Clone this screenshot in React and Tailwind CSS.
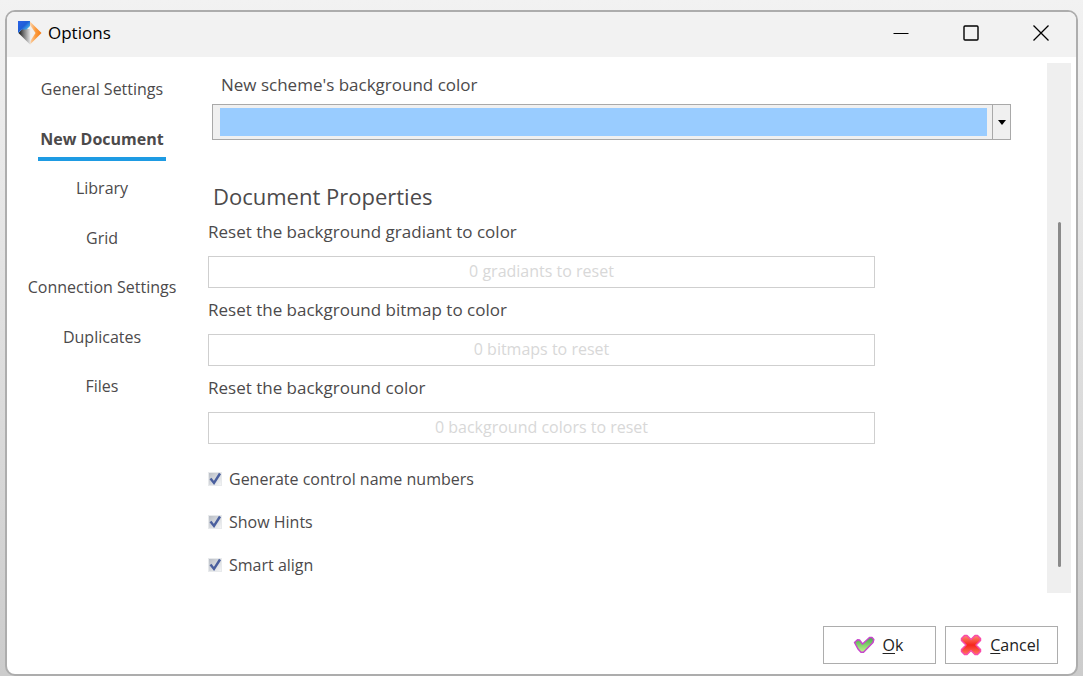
import React, { useState } from 'react';

const tabs = [
  'General Settings',
  'New Document',
  'Library',
  'Grid',
  'Connection Settings',
  'Duplicates',
  'Files',
];

const resets = [
  { id: 'gradiant', label: 'Reset the background gradiant to color', action: '0 gradiants to reset' },
  { id: 'bitmap', label: 'Reset the background bitmap to color', action: '0 bitmaps to reset' },
  { id: 'color', label: 'Reset the background color', action: '0 background colors to reset' },
];

const toggles = ['Generate control name numbers', 'Show Hints', 'Smart align'];

const Logo = () => (
  <svg width="24" height="24" viewBox="0 0 24 24" aria-hidden="true">
    <defs>
      <linearGradient id="blue" x1="0" y1="0" x2="1" y2="1">
        <stop offset="0" stopColor="#2a62e8" />
        <stop offset="0.45" stopColor="#1f5fd6" />
        <stop offset="0.8" stopColor="#4fc6ee" />
        <stop offset="1" stopColor="#1b86c8" />
      </linearGradient>
      <linearGradient id="dark" x1="0" y1="0" x2="1" y2="0">
        <stop offset="0" stopColor="#111111" />
        <stop offset="0.4" stopColor="#6d6d6d" />
        <stop offset="1" stopColor="#e8e8e8" />
      </linearGradient>
      <linearGradient id="orange" x1="0" y1="0" x2="1" y2="0">
        <stop offset="0" stopColor="#fbd3ab" />
        <stop offset="0.5" stopColor="#fb9a3c" />
        <stop offset="1" stopColor="#f57a12" />
      </linearGradient>
    </defs>
    <path d="M12 0.5 L23.5 12 L12 23.5 Z" fill="url(#orange)" />
    <path d="M8 8 L12 4 L17.5 12 L12 20.5 Z" fill="#f1efed" />
    <path d="M0.5 12 L4 8 H12.5 V23.5 H12 Z" fill="url(#dark)" />
    <path d="M0 0 H12 V5 L8.5 8.5 H4 L0 12 Z" fill="url(#blue)" />
  </svg>
);

const CheckIcon = () => (
  <svg width="22" height="18" viewBox="0 0 22 18" aria-hidden="true">
    <defs>
      <linearGradient id="green" x1="0" y1="0" x2="0" y2="1">
        <stop offset="0" stopColor="#46a84a" />
        <stop offset="1" stopColor="#c0f890" />
      </linearGradient>
    </defs>
    <path
      d="M1.5 6.5 L4.5 3.8 L6.5 4 L9.5 8 L16.5 1.5 L19 1.5 L20.8 3.5 L20 6.5 L10.5 16.2 L8 16.2 L5 13 Z"
      fill="url(#green)"
      stroke="#c845cc"
      strokeWidth="1.5"
      strokeLinejoin="round"
    />
  </svg>
);

const CrossIcon = () => (
  <svg width="22" height="22" viewBox="0 0 22 22" aria-hidden="true">
    <defs>
      <linearGradient id="red" x1="0" y1="0" x2="0" y2="1">
        <stop offset="0" stopColor="#ff8a72" />
        <stop offset="0.5" stopColor="#f5261c" />
        <stop offset="1" stopColor="#ff7560" />
      </linearGradient>
    </defs>
    <path
      d="M1.5 4.5 L4.5 1.5 L7 1.5 L11 5.5 L15 1.5 L17.5 1.5 L20.5 4.5 L20.5 6.5 L16 11 L20.5 15.5 L20.5 17.5 L17.5 20.5 L15 20.5 L11 16.5 L7 20.5 L4.5 20.5 L1.5 17.5 L1.5 15.5 L6 11 L1.5 6.5 Z"
      fill="url(#red)"
      stroke="#f94bab"
      strokeWidth="1.5"
      strokeLinejoin="round"
    />
  </svg>
);

const TitleBar = () => (
  <header className="flex h-[45px] shrink-0 items-center bg-[#f2f2f2] pb-[3px] pl-[11px]">
    <Logo />
    <h1 className="ml-[6px] flex-1 text-[17px] text-black">Options</h1>
    <button type="button" aria-label="Minimize" className="flex h-full w-[70px] items-center justify-center">
      <svg width="16" height="16" viewBox="0 0 16 16" stroke="#000">
        <path d="M0.5 8.5 H15.5" />
      </svg>
    </button>
    <button type="button" aria-label="Maximize" className="flex h-full w-[70px] items-center justify-center">
      <svg width="16" height="16" viewBox="0 0 16 16" fill="none" stroke="#000" strokeWidth="1.4">
        <rect x="1" y="1" width="14" height="14" rx="1" />
      </svg>
    </button>
    <button type="button" aria-label="Close" className="flex h-full w-[70px] items-center justify-center">
      <svg width="16" height="16" viewBox="0 0 16 16" stroke="#000" strokeWidth="1.3">
        <path d="M0.5 0.5 L15.5 15.5 M15.5 0.5 L0.5 15.5" />
      </svg>
    </button>
  </header>
);

const Toggle = ({ label }) => {
  const [checked, setChecked] = useState(true);

  return (
    <label className="flex h-[20px] items-center gap-[7px]">
      <span className="relative flex h-[14px] w-[14px]">
        <input
          type="checkbox"
          checked={checked}
          onChange={(e) => setChecked(e.target.checked)}
          className="h-[14px] w-[14px] appearance-none border border-[#e8eaec] bg-linear-to-br from-[#b9bec6] to-[#f4f5f6]"
        />
        {checked && (
          <svg className="pointer-events-none absolute inset-0" width="14" height="14" viewBox="0 0 14 14" fill="none">
            <path d="M2.5 6.5 L6 11 L12 1.5" stroke="#4a5f9e" strokeWidth="2.4" />
          </svg>
        )}
      </span>
      {label}
    </label>
  );
};

export default function App() {
  const [active, setActive] = useState('New Document');

  return (
    <div className="flex h-screen min-h-[640px] flex-col bg-linear-to-b from-[#f2f2f2] to-[#cccccc] pt-[10px] pr-[5px] pl-[5px] font-['Open_Sans','Noto_Sans',sans-serif] text-[16px] leading-[24px] text-[#4c4a4b]">
      <div className="flex flex-1 flex-col overflow-hidden rounded-[10px] border-2 border-[#adadad] bg-white">
        <TitleBar />

        <div className="flex flex-1 pt-[6px] pr-[5px]">
          <nav className="flex h-[345px] w-[190px] shrink-0 flex-col items-center justify-between pt-[8px]">
            {tabs.map((tab) => (
              <button
                key={tab}
                type="button"
                onClick={() => setActive(tab)}
                className={
                  tab === active
                    ? 'h-[40px] border-b-4 border-[#1e9be3] px-[2px] font-bold'
                    : 'h-[40px] border-b-4 border-transparent'
                }
              >
                {tab}
              </button>
            ))}
          </nav>

          <main className="flex-1 pt-[10px] pl-[11px]">
            <div className="mr-[36px] ml-[4px]">
              <label htmlFor="scheme-color" className="block pl-[9px] text-[17px]">
                New scheme's background color
              </label>
              <div className="mt-[7px] flex h-[36px] border border-[#a9a9a9] bg-[#f0f0f0]">
                <select
                  id="scheme-color"
                  className="my-[3px] mr-[5px] ml-[7px] flex-1 appearance-none bg-[#99ccff]"
                >
                  <option value="#99ccff" aria-label="Light blue" />
                </select>
                <span className="flex w-[18px] items-center justify-center border-l border-[#a9a9a9]">
                  <svg width="8" height="5" viewBox="0 0 8 5" aria-hidden="true">
                    <path d="M0 0 H8 L4 5 Z" fill="#000" />
                  </svg>
                </span>
              </div>
            </div>

            <h2 className="mt-[40px] pl-[5px] text-[22px] leading-[32px]">Document Properties</h2>

            <div className="mt-[8px] mr-[172px] flex flex-col gap-[10px]">
              {resets.map(({ id, label, action }) => (
                <div key={id}>
                  <p id={id} className="text-[17px]">{label}</p>
                  <button
                    type="button"
                    disabled
                    aria-describedby={id}
                    className="mt-[12px] h-[32px] w-full border border-[#cfcfcf] pb-[2px] text-[#d8d8d8]"
                  >
                    {action}
                  </button>
                </div>
              ))}
            </div>

            <div className="mt-[25px] flex flex-col gap-[23px]">
              {toggles.map((label) => (
                <Toggle key={label} label={label} />
              ))}
            </div>
          </main>

          <div className="h-[530px] w-[24px] shrink-0 bg-[#efefef] pt-[159px] pl-[11px]">
            <div className="h-[345px] w-[3px] rounded-full bg-[#8a8a8a]" />
          </div>
        </div>

        <footer className="flex shrink-0 justify-end gap-[9px] pr-[18px] pb-[10px] text-[#222222]">
          <button
            type="button"
            className="flex h-[38px] w-[113px] items-center justify-center gap-[8px] border border-[#adadad] pr-[3px]"
          >
            <CheckIcon />
            <span>
              <u className="underline-offset-2">O</u>k
            </span>
          </button>
          <button
            type="button"
            className="flex h-[38px] w-[113px] items-center justify-center gap-[8px] border border-[#adadad] pr-[3px]"
          >
            <CrossIcon />
            <span>
              <u className="underline-offset-2">C</u>ancel
            </span>
          </button>
        </footer>
      </div>
    </div>
  );
}
